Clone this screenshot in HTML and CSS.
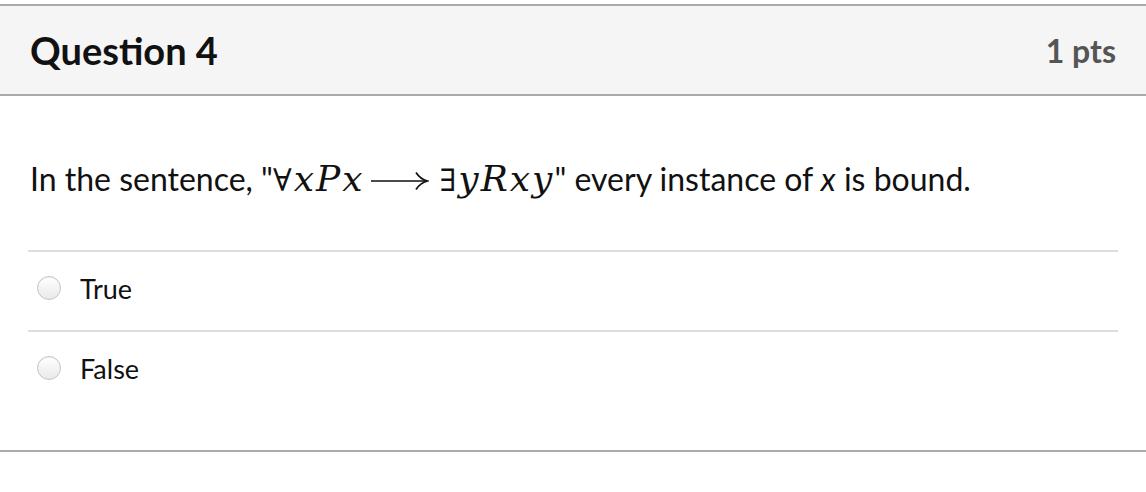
FILE: index.html
```html
<!DOCTYPE html>
<html>
<head>
<meta charset="utf-8">
<link rel="stylesheet" href="styles.css">
</head>
<body>
<div class="quiz-question">
  <div class="header">
    <h2 class="title">Question 4</h2>
    <div class="points">1 pts</div>
  </div>
  <div class="content">
    <p class="question-text">In the sentence, "<span class="math"><span class="sym">∀</span><i>x</i><i class="cap">P</i><i>x</i><svg class="arrow" width="58" height="20" viewBox="0 0 58 20" aria-label="⟶"><path d="M0 10 H56" /><path d="M45 1.5 C47.5 5.5 51 8.5 56.5 10 C51 11.5 47.5 14.5 45 18.5" /></svg><span class="sym">∃</span><i>y</i><i class="cap">R</i><i>x</i><i>y</i></span>" every instance of <i class="plain">x</i> is bound.</p>
    <div class="answers">
      <label class="answer"><span class="radio"></span><span class="answer-label">True</span></label>
      <label class="answer"><span class="radio"></span><span class="answer-label">False</span></label>
    </div>
  </div>
</div>
</body>
</html>
```
FILE: styles.css
```css
html, body {
  margin: 0;
  padding: 0;
  background: #fff;
  font-family: Lato, "Noto Sans", sans-serif;
  color: #111;
}

.quiz-question {
  margin-top: 4px;
  border-bottom: 2px solid #aaa;
  padding-bottom: 40px;
}

.header {
  display: flex;
  justify-content: space-between;
  align-items: center;
  height: 88px;
  padding: 0 30px;
  background: #f5f5f5;
  border-top: 2px solid #aaa;
  border-bottom: 2px solid #aaa;
}

.title {
  margin: 0;
  font-size: 38px;
  font-weight: 700;
  color: #111;
}

.points {
  font-size: 32px;
  font-weight: 700;
  color: #555;
}

.content {
  padding: 0 28px;
}

.question-text {
  margin: 0;
  padding: 61px 2px 49px;
  font-size: 32px;
  line-height: 44px;
  color: #111;
}

.math {
  font-family: "DejaVu Serif", "Liberation Serif", serif;
  font-size: 36px;
  line-height: 1;
}

.math i {
  font-style: italic;
  letter-spacing: 2px;
}

.math .sym {
  font-family: "DejaVu Serif", serif;
  font-style: normal;
  font-size: 31px;
  margin-right: 2px;
}

.math .arrow {
  display: inline-block;
  vertical-align: baseline;
  margin: 0 11px 0 6px;
  fill: none;
  stroke: #111;
  stroke-width: 1.7;
}

.plain {
  font-style: italic;
}

.answers {
  display: flex;
  flex-direction: column;
}

.answer {
  box-sizing: border-box;
  display: flex;
  align-items: center;
  gap: 19px;
  height: 80px;
  padding: 0 0 6px 9px;
  border-top: 2px solid #ddd;
}

.radio {
  width: 22px;
  height: 22px;
  border-radius: 50%;
  border: 1px solid #c4c4c4;
  background: linear-gradient(#ffffff, #e9e9e9);
  box-shadow: inset 0 1px 1px rgba(0,0,0,0.05);
}

.answer-label {
  font-size: 27px;
  color: #111;
}
```
